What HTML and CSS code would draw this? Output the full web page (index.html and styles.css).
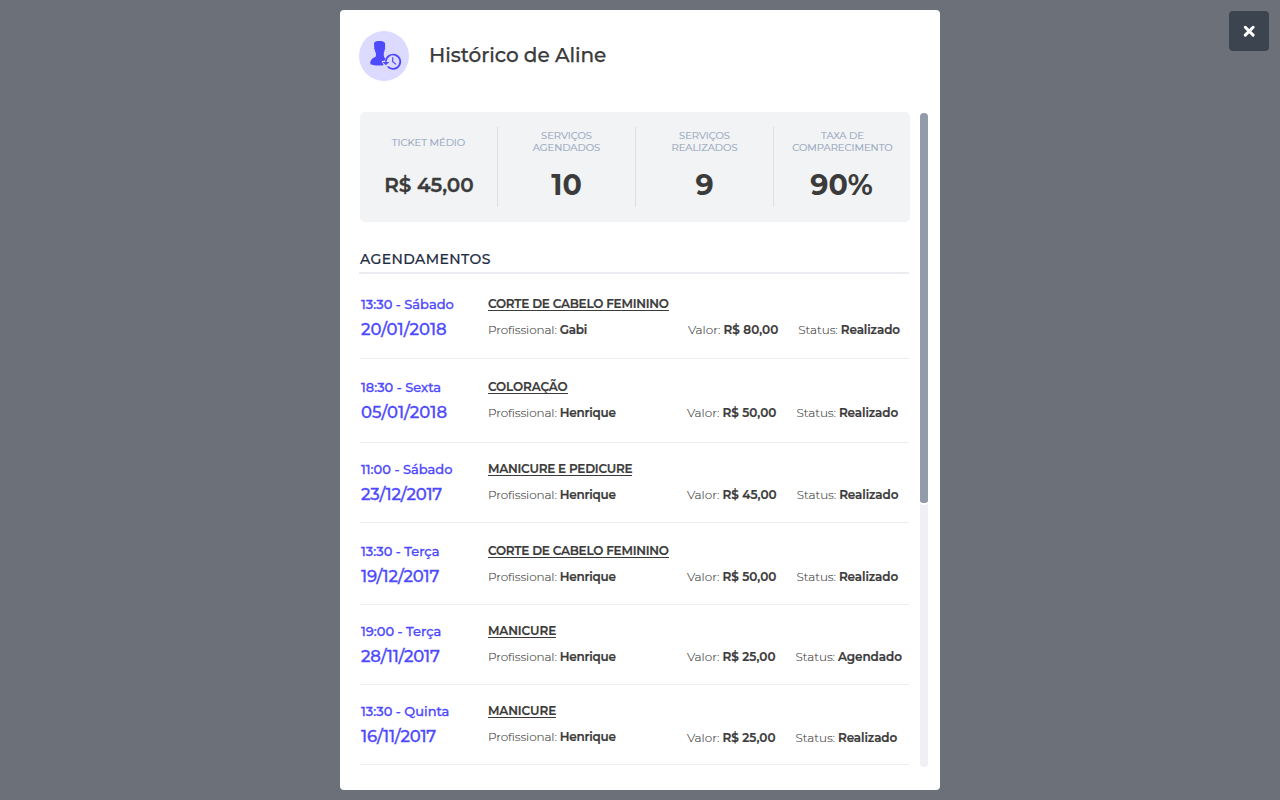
FILE: index.html
```html
<!DOCTYPE html>
<html lang="pt-BR">
<head>
<meta charset="utf-8">
<title>Histórico de Aline</title>
<link rel="stylesheet" href="styles.css">
</head>
<body>
<main class="modal">
  <header class="head">
    <svg class="avatar" viewBox="0 0 50 50" aria-hidden="true">
      <circle cx="25" cy="25" r="25" fill="#dcdaff"/>
      <path d="M15.300 11.600C16.100 10.400 18.300 10 20.600 10c2.600 0 4.700.6 5.300 1.900.4 1.400.2 3.300.1 4.600.3.500.2 1.500-.2 2.100-.2 1.400-.6 2.400-1 3.200v3.200c.3 1.300.9 1.900 1.600 2.400a8.900 8.900 0 0 0-.9 2.400l-3 .3 1.900 3.400v.8c-4.300.6-9.800.3-13-1-.5-3.400 1-5.400 3.300-6.500 1.200-.6 1.900-1 2.200-1.700v-3.200c-.5-.8-1-1.900-1.300-3.300-.5-.6-.6-1.600-.3-2.200-.1-1.700-.6-3.300 0-4.800z" fill="#4e49fc"/>
      <path d="M26.900 30.800a7.200 7.200 0 1 1 1.800 4.700" fill="none" stroke="#4e49fc" stroke-width="1.700"/>
      <path d="M23.500 30.900h6.800L26.900 34.200z" fill="#4e49fc"/>
      <path d="M33.700 26.200v4.600l3.300 2.600" fill="none" stroke="#4e49fc" stroke-width="1.200"/>
    </svg>
    <h1 class="title">Histórico de Aline</h1>
  </header>
  <div class="content">
    <div class="main">
      <section class="stats">
        <div class="stat"><div class="label label-single">TICKET MÉDIO</div><div class="number money">R$ 45,00</div></div>
        <div class="stat"><div class="label">SERVIÇOS<br>AGENDADOS</div><div class="number">10</div></div>
        <div class="stat"><div class="label">SERVIÇOS<br>REALIZADOS</div><div class="number">9</div></div>
        <div class="stat"><div class="label">TAXA DE<br>COMPARECIMENTO</div><div class="number percent">90%</div></div>
      </section>
      <h2 class="section-title">AGENDAMENTOS</h2>
      <ul class="list">
        <li class="row row-first">
          <div class="when"><div class="time">13:30 - Sábado</div><div class="date">20/01/2018</div></div>
          <div class="info"><a class="service">CORTE DE CABELO FEMININO</a>
            <div class="details"><span class="pro">Profissional: <b>Gabi</b></span><span class="value">Valor: <b>R$ 80,00</b></span><span class="status">Status: <b>Realizado</b></span></div></div>
        </li>
        <li class="row row-tall">
          <div class="when"><div class="time">18:30 - Sexta</div><div class="date">05/01/2018</div></div>
          <div class="info"><a class="service service-short">COLORAÇÃO</a>
            <div class="details"><span class="pro">Profissional: <b>Henrique</b></span><span class="value">Valor: <b>R$ 50,00</b></span><span class="status">Status: <b>Realizado</b></span></div></div>
        </li>
        <li class="row">
          <div class="when"><div class="time">11:00 - Sábado</div><div class="date date-tight">23/12/2017</div></div>
          <div class="info"><a class="service">MANICURE E PEDICURE</a>
            <div class="details"><span class="pro">Profissional: <b>Henrique</b></span><span class="value">Valor: <b>R$ 45,00</b></span><span class="status">Status: <b>Realizado</b></span></div></div>
        </li>
        <li class="row row-mid">
          <div class="when"><div class="time">13:30 - Terça</div><div class="date date-tight">19/12/2017</div></div>
          <div class="info"><a class="service">CORTE DE CABELO FEMININO</a>
            <div class="details"><span class="pro">Profissional: <b>Henrique</b></span><span class="value">Valor: <b>R$ 50,00</b></span><span class="status">Status: <b>Realizado</b></span></div></div>
        </li>
        <li class="row">
          <div class="when"><div class="time">19:00 - Terça</div><div class="date date-tight">28/11/2017</div></div>
          <div class="info"><a class="service service-short">MANICURE</a>
            <div class="details"><span class="pro">Profissional: <b>Henrique</b></span><span class="value">Valor: <b>R$ 25,00</b></span><span class="status">Status: <b>Agendado</b></span></div></div>
        </li>
        <li class="row row-last">
          <div class="when"><div class="time">13:30 - Quinta</div><div class="date date-tight">16/11/2017</div></div>
          <div class="info"><a class="service service-short">MANICURE</a>
            <div class="details"><span class="pro">Profissional: <b>Henrique</b></span><span class="value">Valor: <b>R$ 25,00</b></span><span class="status">Status: <b>Realizado</b></span></div></div>
        </li>
      </ul>
    </div>
    <div class="track"><div class="thumb"></div></div>
  </div>
</main>
<button class="close" aria-label="Fechar">
  <svg width="12" height="12" viewBox="0 0 12 12"><path d="M2.300 2.300l7.800 7.800M10.100 2.300l-7.800 7.800" stroke="#fff" stroke-width="3" stroke-linecap="round"/></svg>
</button>
</body>
</html>
```

FILE: styles.css
```css
* { box-sizing: border-box; }
body {
  margin: 0;
  height: 800px;
  padding-top: 10px;
  overflow: hidden;
  background: #6c7078;
  color: #3b3b3b;
  font-family: Montserrat, Inter, sans-serif;
}
.modal {
  width: 600px;
  height: 780px;
  margin: 0 auto;
  padding: 21px 12px 0 19px;
  background: #fff;
  border-radius: 4px;
}
.head { display: flex; gap: 20px; height: 81px; }
.avatar { width: 50px; height: 50px; }
.title {
  margin: 9px 0 0;
  font-size: 20px;
  line-height: 30px;
  font-weight: 500;
  letter-spacing: -0.06px;
  -webkit-text-stroke: 0.25px;
}
.content { display: flex; justify-content: space-between; }
.main { width: 551px; }
.stats {
  display: grid;
  grid-template-columns: repeat(4, 138px);
  width: 550px;
  height: 110px;
  margin-left: 1px;
  padding: 15px 0;
  overflow: hidden;
  background: #f1f3f5;
  border-radius: 5px;
}
.stat { border-right: 1px solid #dcdfe5; text-align: center; }
.stat:last-child { border-right: 0; padding-right: 1px; }
.label {
  display: flex;
  align-items: center;
  justify-content: center;
  height: 30px;
  color: #98a7be;
  font-size: 10px;
  line-height: 12px;
  letter-spacing: -0.05px;
  -webkit-text-stroke: 0.15px;
}
.label-single { padding-top: 2px; }
.number {
  font-size: 28.500px;
  line-height: 36px;
  margin-top: 10px;
  font-weight: 700;
}
.number.money {
  padding-left: 1px;
  font-size: 20px;
  font-weight: 600;
  -webkit-text-stroke: 0.3px;
}
.number.percent { padding-right: 2px; }
.section-title {
  width: 550px;
  height: 52px;
  margin: 0;
  padding: 28px 0 0 1px;
  border-bottom: 2px solid #ebebf2;
  color: #1f2d44;
  font-size: 14px;
  line-height: 18px;
  font-weight: 500;
  letter-spacing: 0.4px;
  -webkit-text-stroke: 0.2px;
}
.list { margin: 0; padding: 0; list-style: none; }
.row {
  display: flex;
  width: 549px;
  height: 80px;
  margin-left: 1px;
  padding: 16px 0 0 1px;
  border-bottom: 1px solid #ececf1;
}
.row-first { height: 85px; padding-top: 20px; }
.row-tall { height: 84px; padding-top: 18px; }
.row-mid { height: 82px; padding-top: 18px; }
.when { width: 127px; color: #4e49fc; -webkit-text-stroke: 0.3px; }
.time { font-size: 13px; line-height: 20px; font-weight: 500; }
.date { margin-top: 3px; font-size: 16.500px; line-height: 24px; font-weight: 500; }
.date-tight { letter-spacing: -0.22px; }
.info { flex: 1; }
.service {
  display: block;
  width: fit-content;
  height: 16px;
  margin-top: 1px;
  border-bottom: 1px solid #3b3b3b;
  font-size: 12px;
  line-height: 18px;
  font-weight: 600;
  letter-spacing: -0.23px;
  -webkit-text-stroke: 0.2px;
}
.service-short { letter-spacing: -0.1px; }
.details {
  display: flex;
  margin-top: 10px;
  font-size: 12px;
  line-height: 18px;
  font-weight: 300;
  white-space: nowrap;
  -webkit-text-stroke: 0.12px;
}
.details b { font-weight: 600; -webkit-text-stroke: 0.2px; }
.pro { width: 199px; letter-spacing: -0.1px; }
.pro b { letter-spacing: -0.2px; }
.value { margin-right: 20px; }
.value b { letter-spacing: 0.08px; }
.status { letter-spacing: -0.06px; }
.status b { letter-spacing: -0.08px; }
.row-first .pro { width: 200px; }
.row-last .value, .row-last .status { padding-top: 1px; }
.track { width: 8px; height: 654px; margin-top: 1px; background: #efeff5; border-radius: 4px; }
.thumb { height: 392px; background: #919ba9; background-clip: padding-box; border-bottom: 2px solid #fff; border-radius: 4px; }
.close {
  position: absolute;
  top: 11px;
  right: 11px;
  display: grid;
  place-items: center;
  width: 40px;
  height: 40px;
  padding: 0;
  border: 0;
  border-radius: 4px;
  background: #3c444f;
}
```
